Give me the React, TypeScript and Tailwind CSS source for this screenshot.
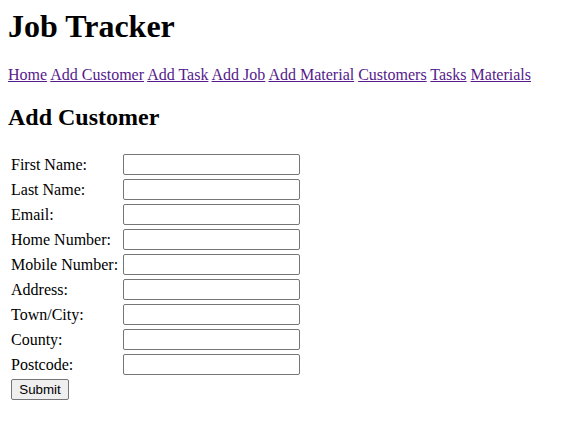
const links = ['Home', 'Add Customer', 'Add Task', 'Add Job', 'Add Material', 'Customers', 'Tasks', 'Materials'];

const fields = [
  { id: 'firstName', label: 'First Name:' },
  { id: 'lastName', label: 'Last Name:' },
  { id: 'email', label: 'Email:' },
  { id: 'homeNumber', label: 'Home Number:' },
  { id: 'mobileNumber', label: 'Mobile Number:' },
  { id: 'address', label: 'Address:' },
  { id: 'town', label: 'Town/City:' },
  { id: 'county', label: 'County:' },
  { id: 'postcode', label: 'Postcode:' },
];

export default function App() {
  return (
    <div className="min-h-screen bg-white p-2 text-black text-[16px] font-['Liberation_Serif','Times_New_Roman',serif]">
      <h1 className="text-[32px] font-bold leading-[37px] mb-[21px]">Job Tracker</h1>

      <nav className="leading-[18px]">
        {links.map((l, i) => (
          <span key={l}>
            <a href="#" className="text-[#551a8b] underline">
              {l}
            </a>
            {i < links.length - 1 ? ' ' : ''}
          </span>
        ))}
      </nav>

      <h2 className="text-[24px] font-bold leading-[28px] mt-[19px] mb-[20px]">Add Customer</h2>

      <form onSubmit={(e) => e.preventDefault()}>
        <table className="border-separate border-spacing-[2px] leading-[18px]">
          <tbody>
            {fields.map((f) => (
              <tr key={f.id}>
                <td className="p-px align-middle w-[110px] whitespace-nowrap">
                  <label htmlFor={f.id}>{f.label}</label>
                </td>
                <td className="p-px align-middle">
                  <input
                    id={f.id}
                    type="text"
                    className="block w-[177px] h-[21px] border border-[#767676] rounded-[2px] px-[2px] text-[13.33px] font-['Liberation_Sans',Arial,sans-serif] bg-white"
                  />
                </td>
              </tr>
            ))}
            <tr>
              <td className="p-px align-middle">
                <button
                  type="submit"
                  className="block w-[58px] h-[21px] border border-[#767676] rounded-[2px] bg-[#efefef] text-center text-[13.33px] leading-[15px] font-['Liberation_Sans',Arial,sans-serif] text-black"
                >
                  Submit
                </button>
              </td>
              <td />
            </tr>
          </tbody>
        </table>
      </form>
    </div>
  );
}
